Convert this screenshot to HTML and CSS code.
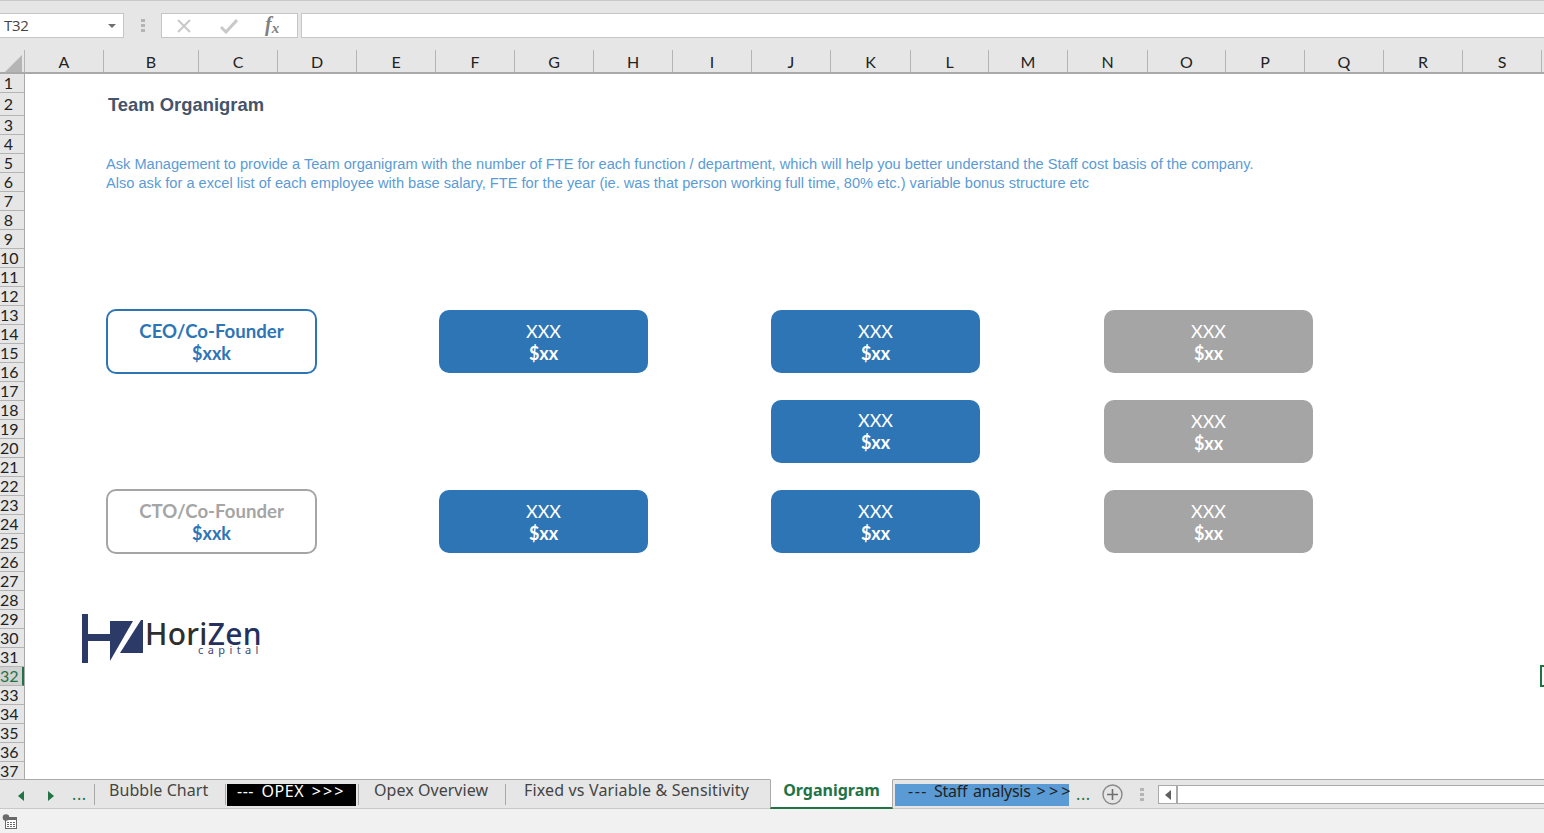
FILE: index.html
```html
<!DOCTYPE html>
<html lang="en">
<head>
<meta charset="utf-8">
<title>Team Organigram</title>
<link rel="stylesheet" href="styles.css">
</head>
<body>
<div class="app">
  <div class="formula-bar">
    <div class="name-box"><span>T32</span><i class="caret"></i></div>
    <svg class="grip" width="4" height="14" viewBox="0 0 4 14"><rect x="0" y="0" width="4" height="3"/><rect x="0" y="5" width="4" height="3"/><rect x="0" y="10" width="4" height="3"/></svg>
    <div class="fx-box">
      <svg class="fx-icon" width="16" height="16" viewBox="0 0 16 16"><path d="M2 2L14 14M14 2L2 14" fill="none" stroke="#c9c9c9" stroke-width="2"/></svg>
      <svg class="fx-icon" width="18" height="16" viewBox="0 0 18 16"><path d="M1 9L6 14L17 2" fill="none" stroke="#c9c9c9" stroke-width="3"/></svg>
      <span class="fx-label">f<sub>x</sub></span>
    </div>
    <div class="formula-input"></div>
  </div>

  <div class="col-headers">
    <div class="corner"><svg width="17" height="17" viewBox="0 0 17 17"><path d="M17 0V17H0Z" fill="#b5b5b5"/></svg></div>
    <div class="col c79">A</div><div class="col c95">B</div><div class="col c79">C</div><div class="col c79">D</div><div class="col c79">E</div><div class="col c79">F</div><div class="col c79">G</div><div class="col c79">H</div><div class="col c79">I</div><div class="col c79">J</div><div class="col c80">K</div><div class="col c78">L</div><div class="col c79">M</div><div class="col c80">N</div><div class="col c78">O</div><div class="col c79">P</div><div class="col c79">Q</div><div class="col c79">R</div><div class="col c79">S</div>
  </div>

  <div class="sheet">
    <div class="row-headers">
      <div class="rw">1</div><div class="rw rw-tall">2</div><div class="rw">3</div><div class="rw">4</div><div class="rw">5</div><div class="rw">6</div><div class="rw">7</div><div class="rw">8</div><div class="rw">9</div><div class="rw">10</div><div class="rw">11</div><div class="rw">12</div><div class="rw">13</div><div class="rw">14</div><div class="rw">15</div><div class="rw">16</div><div class="rw">17</div><div class="rw">18</div><div class="rw">19</div><div class="rw">20</div><div class="rw">21</div><div class="rw">22</div><div class="rw">23</div><div class="rw">24</div><div class="rw">25</div><div class="rw">26</div><div class="rw">27</div><div class="rw">28</div><div class="rw">29</div><div class="rw">30</div><div class="rw">31</div><div class="rw rw-active">32</div><div class="rw">33</div><div class="rw">34</div><div class="rw">35</div><div class="rw">36</div><div class="rw rw-last">37</div>
    </div>
    <div class="canvas">
      <h1 class="title">Team Organigram</h1>
      <p class="note">Ask Management to provide a Team organigram with the number of FTE for each function / department, which will help you better understand the Staff cost basis of the company.<br>Also ask for a excel list of each employee with base salary, FTE for the year (ie. was that person working full time, 80% etc.) variable bonus structure etc</p>

      <div class="org">
        <div class="box box-outline"><span class="bt role">CEO/Co-Founder</span><span class="bt">$xxk</span></div>
        <div class="box box-blue"><span>XXX</span><span class="bt">$xx</span></div>
        <div class="box box-blue"><span>XXX</span><span class="bt">$xx</span></div>
        <div class="box box-gray"><span>XXX</span><span class="bt">$xx</span></div>

        <div class="box box-blue box-high col-3"><span>XXX</span><span class="bt">$xx</span></div>
        <div class="box box-gray"><span>XXX</span><span class="bt">$xx</span></div>

        <div class="box box-outline box-outline-gray"><span class="bt role muted">CTO/Co-Founder</span><span class="bt">$xxk</span></div>
        <div class="box box-blue"><span>XXX</span><span class="bt">$xx</span></div>
        <div class="box box-blue"><span>XXX</span><span class="bt">$xx</span></div>
        <div class="box box-gray"><span>XXX</span><span class="bt">$xx</span></div>
      </div>

      <svg class="logo" width="186" height="54" viewBox="0 0 186 54">
        <path d="M0 2H6V51H0ZM6 22H28V29H6Z" fill="#2b3a67"/>
        <path d="M28 9H51L28 49Z" fill="#2b3a67"/>
        <path d="M59 8L61 8V41H38Z" fill="#2b3a67"/>
        <text x="63" y="33" class="logo-word"><tspan fill="#2e2e2e">Hori</tspan><tspan fill="#25305e">Zen</tspan></text>
        <text x="116" y="42" class="logo-sub">capital</text>
      </svg>

      <div class="sel-mark"></div>
    </div>
  </div>

  <div class="tabs">
    <svg class="nav nav-l" width="6" height="10" viewBox="0 0 6 10"><path d="M6 0V10L0 5Z" fill="#217346"/></svg>
    <svg class="nav nav-r" width="6" height="10" viewBox="0 0 6 10"><path d="M0 0V10L6 5Z" fill="#217346"/></svg>
    <span class="ellipsis el-left">...</span>
    <i class="tsep"></i>
    <div class="tab tab-bubble">Bubble Chart</div>
    <i class="tsep"></i>
    <div class="tab tab-opex">--- OPEX <span class="gts">&gt; &gt; &gt;</span></div>
    <i class="tsep"></i>
    <div class="tab tab-overview">Opex Overview</div>
    <i class="tsep"></i>
    <div class="tab tab-fixed">Fixed vs Variable &amp; Sensitivity</div>
    <div class="tab tab-active">Organigram</div>
    <div class="tab tab-staff"><span class="dash">---</span> Staff analysis <span class="gts">&gt; &gt; &gt;</span></div>
    <span class="ellipsis el-right">...</span>
    <svg class="plus" width="21" height="21" viewBox="0 0 21 21"><circle cx="10.5" cy="10.5" r="9.5" fill="none" stroke="#8a8a8a" stroke-width="1.4"/><path d="M10.5 5V16M5 10.5H16" stroke="#6f6f6f" stroke-width="1.6"/></svg>
    <svg class="grip grip-tabs" width="4" height="14" viewBox="0 0 4 14"><rect x="0" y="0" width="4" height="3"/><rect x="0" y="5" width="4" height="3"/><rect x="0" y="10" width="4" height="3"/></svg>
    <div class="hscroll">
      <div class="hbtn"><svg width="6" height="10" viewBox="0 0 6 10"><path d="M6 0V10L0 5Z" fill="#5f5f5f"/></svg></div>
      <div class="htrack"></div>
    </div>
  </div>

  <div class="status">
    <svg width="16" height="16" viewBox="0 0 16 16"><rect x="3.500" y="3.500" width="11" height="11" fill="#fff" stroke="#6a6a6a"/><rect x="3" y="3" width="12" height="3" fill="#6a6a6a"/><path d="M5 8.500h2M8 8.500h2M11 8.500h2M5 10.500h2M8 10.500h2M11 10.500h2M5 12.500h2M8 12.500h2M11 12.500h2" stroke="#6a6a6a"/><circle cx="4" cy="3.500" r="3.300" fill="#6a6a6a"/></svg>
  </div>
</div>
</body>
</html>
```
FILE: styles.css
```css
* { box-sizing: border-box; }
html, body { margin: 0; padding: 0; height: 100%; overflow: hidden; background: #fff; }
.app { width: 1544px; height: 833px; display: flex; flex-direction: column; overflow: hidden; font-family: "Noto Sans", sans-serif; }

/* formula bar */
.formula-bar { height: 50px; background: #e6e6e6; border-top: 1px solid #c9c9c9; padding-top: 12px; display: flex; align-items: flex-start; flex: none; }
.name-box { width: 124px; height: 25px; background: #fff; border: 1px solid #c6c6c6; border-left: 0; display: flex; align-items: center; justify-content: space-between; padding: 0 7px 2px 4px; font-size: 15px; color: #444; font-family: "Open Sans", sans-serif; letter-spacing: -0.3px; }
.caret { width: 0; height: 0; margin-top: 2px; border-left: 4px solid transparent; border-right: 4px solid transparent; border-top: 4px solid #6f6f6f; }
.grip { fill: #b4b4b4; flex: none; }
.formula-bar .grip { margin: 6px 16px 0 17px; }
.fx-box { width: 137px; height: 25px; background: #fff; border: 1px solid #c6c6c6; display: flex; align-items: center; padding-left: 14px; }
.fx-icon { flex: none; margin-right: 28px; }
.fx-icon + .fx-icon { margin-right: 27px; }
.fx-label { font-family: "Liberation Serif", serif; font-style: italic; font-weight: 700; font-size: 20px; color: #808080; line-height: 1; margin-bottom: 3px; }
.fx-label sub { font-size: 15px; vertical-align: -2px; line-height: 0; }
.formula-input { flex: 1; height: 25px; margin-left: 3px; background: #fff; border: 1px solid #c6c6c6; border-right: 0; }

/* column headers */
.col-headers { height: 24px; flex: none; display: flex; background: #e6e6e6; border-bottom: 2px solid #a9a9a9; }
.corner { width: 25px; flex: none; padding: 5px 0 0 5px; border-right: 1px solid #b4b4b4; }
.corner svg { display: block; }
.col { flex: none; border-right: 1px solid #b4b4b4; text-align: center; font: 16px/24px Lato, "Open Sans", sans-serif; color: #222; }
.c78 { width: 78px; } .c79 { width: 79px; } .c80 { width: 80px; } .c95 { width: 95px; }

/* sheet */
.sheet { flex: none; height: 705px; display: flex; overflow: hidden; background: #fff; }
.row-headers { width: 25px; flex: none; background: #e6e6e6; border-right: 1px solid #a9a9a9; }
.rw { height: 19px; width: 24px; padding-right: 7px; white-space: nowrap; font: 16px/18px Lato, "Open Sans", sans-serif; color: #222; text-align: center; border-bottom: 1px solid #b4b4b4; }
.rw-tall { height: 23px; line-height: 22px; }
.rw-active { color: #217346; background: #d2d2d2; border-right: 2px solid #217346; }
.rw-last { height: 18px; border-bottom: 0; }

.canvas { flex: 1; position: relative; min-width: 0; padding-top: 19px; }
.title { margin: 0 0 0 83px; font: bold 18.4px/23px "Liberation Sans", Arial, sans-serif; color: #44546a; }
.note { margin: 39px 0 0 81px; font: 14.61px/19px "Liberation Sans", Arial, sans-serif; color: #5b9bd5; white-space: nowrap; }

.org { margin: 117px 0 0 81px; display: grid; grid-template-columns: 333px 332px 333px 209px; grid-auto-rows: 90px; align-items: start; }
.box { width: 209px; height: 63px; border-radius: 10px; display: flex; flex-direction: column; align-items: center; justify-content: center; font: 18px/22px Lato, sans-serif; color: #fff; }
.bt { font-weight: 700; }
.role { font-size: 18.6px; }
.box-blue { background: #2e75b6; }
.box-gray { background: #a5a5a5; }
.box-high { padding-bottom: 2px; }
.box-outline { width: 211px; height: 65px; margin-top: -1px; background: #fff; border: 2px solid #2e75b6; color: #2e75b6; }
.box-outline-gray { border-color: #a5a5a5; }
.muted { color: #a5a5a5; }
.col-3 { grid-column: 3; }

.logo { display: block; margin: 32px 0 0 57px; overflow: visible; }
.logo-word { font: 500 30px "Noto Sans", sans-serif; letter-spacing: 0.3px; }
.logo-sub { font: 11px "Noto Sans", sans-serif; letter-spacing: 4.4px; fill: #3c4a75; }

.sel-mark { position: absolute; right: 0; top: 591px; width: 4px; height: 22px; border: 2px solid #217346; border-right: 0; }

/* tabs */
.tabs { height: 30px; flex: none; display: flex; align-items: center; background: #e6e6e6; border-top: 1px solid #a9a9a9; border-bottom: 1px solid #c9c9c9; font-size: 16px; }
.nav { flex: none; margin-top: 3px; }
.nav-l { margin-left: 18px; }
.nav-r { margin-left: 24px; }
.ellipsis { color: #217346; font: 16px/20px "Noto Sans", sans-serif; letter-spacing: 0.6px; flex: none; }
.el-left { margin-left: 18px; width: 22px; }
.el-right { width: 33px; padding-left: 7px; }
.tsep { width: 1px; height: 21px; background: #a9a9a9; flex: none; margin-top: 1px; }
.tab { flex: none; white-space: nowrap; color: #444; height: 22px; line-height: 14px; font-family: "Noto Sans", sans-serif; font-size: 16px; letter-spacing: 0.05px; }
.gts { word-spacing: -3px; }
.dash { letter-spacing: 1.5px; }
.tab-bubble { margin-left: 14px; width: 116px; }
.tab-opex { margin-left: 1px; width: 129px; background: #000; color: #fff; padding-left: 10px; margin-top: 1px; margin-right: 2px; word-spacing: 3px; letter-spacing: 0.5px; }
.tab-overview { margin-left: 15px; width: 131px; }
.tab-fixed { margin-left: 18px; width: 246px; letter-spacing: 0.16px; }
.tab-active { height: 30px; margin-top: -1px; width: 123px; background: #fff; border: 1px solid #a9a9a9; border-top: 1px solid #fff; border-bottom: 2px solid #217346; color: #217346; font-weight: 700; text-align: center; line-height: 21px; letter-spacing: 0; }
.tab-staff { width: 174px; margin-left: 2px; margin-top: 1px; background: #5b9bd5; color: #222; padding-left: 13px; word-spacing: 2px; letter-spacing: -0.25px; }
.tab-staff .gts { word-spacing: -2px; letter-spacing: 0.5px; }
.plus { flex: none; margin-top: 1px; }
.grip-tabs { margin: 1px 0 0 17px; }
.hscroll { flex: 1; height: 19px; margin-left: 14px; display: flex; border: 1px solid #a9a9a9; border-right: 0; background: #fff; margin-top: 1px; }
.hbtn { width: 19px; flex: none; border-right: 2px solid #a9a9a9; display: flex; align-items: center; justify-content: center; }
.hbtn svg { display: block; }
.htrack { flex: 1; }

.status { flex: none; height: 24px; background: #f1f1f1; padding: 5px 0 0 2px; }
.status svg { display: block; }
```
